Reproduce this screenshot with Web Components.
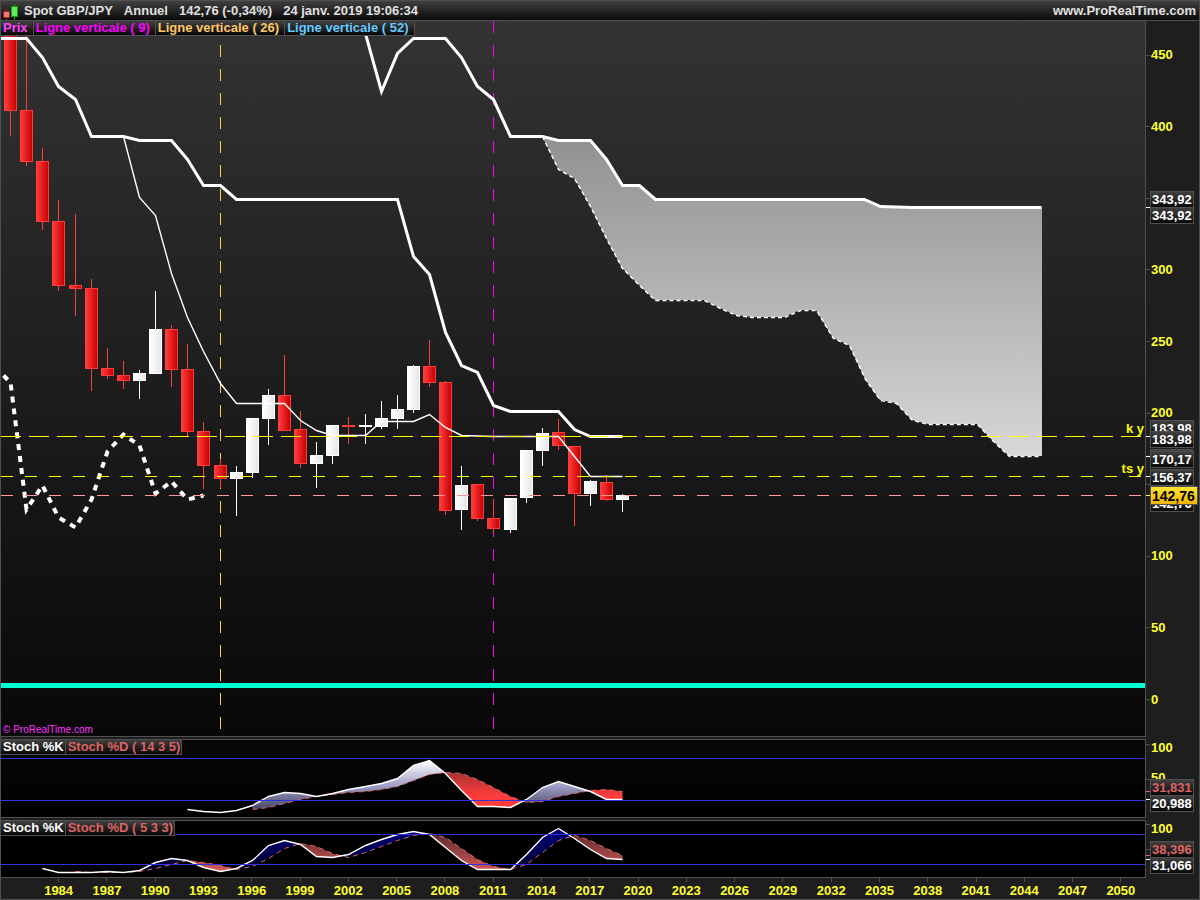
<!DOCTYPE html>
<html lang="fr">
<head>
<meta charset="utf-8">
<meta name="viewport" content="width=device-width, initial-scale=1">
<title>Spot GBP/JPY - Annuel</title>
<style>
  html, body {
    margin: 0;
    height: 100%;
    background: #1e1e1e;
  }
  body {
    font-family: "Liberation Sans", Arial, sans-serif;
    font-size: 13px;
    font-weight: 700;
  }
</style>
</head>
<body>
<chart-window>
  <title-bar slot="title" site="www.ProRealTime.com">
    <span>Spot GBP/JPY</span>
    <span>Annuel</span>
    <span>142,76 (-0,34%)</span>
    <span>24 janv. 2019 19:06:34</span>
  </title-bar>

  <price-pane class="main">
    <legend-tag slot="legend" color="#ff40ff">Prix</legend-tag>
    <legend-tag slot="legend" color="#ff00ff">Ligne verticale ( 9)</legend-tag>
    <legend-tag slot="legend" color="#ffc864">Ligne verticale ( 26)</legend-tag>
    <legend-tag slot="legend" color="#64c8ff">Ligne verticale ( 52)</legend-tag>
    <span slot="credit">© ProRealTime.com</span>
  </price-pane>

  <stoch-pane series="slow">
    <legend-tag slot="legend" color="#ffffff" tight>Stoch %K</legend-tag>
    <legend-tag slot="legend" color="#dc6464" tight>Stoch %D ( 14 3 5)</legend-tag>
  </stoch-pane>

  <stoch-pane series="fast">
    <legend-tag slot="legend" color="#ffffff" tight>Stoch %K</legend-tag>
    <legend-tag slot="legend" color="#dc6464" tight>Stoch %D ( 5 3 3)</legend-tag>
  </stoch-pane>

  <time-axis slot="time" from="1984" to="2050" step="3"></time-axis>
</chart-window>

<script>
// one bar per year
const yearX = year => Math.floor(58.9 + (year - 1984) * 16.112);

const points = list => list.map(p => p.join(',')).join(' ');

// series of y values, one per year, starting at firstYear
const byYear = (firstYear, ys) => ys.map((y, i) => [yearX(firstYear + i), y]);

class ChartWindow extends HTMLElement {
  connectedCallback() {
    this.attachShadow({ mode: 'open' });
    this.shadowRoot.innerHTML = `
      <style>
        :host {
          display: flex;
          flex-direction: column;
          box-sizing: border-box;
          height: 100vh;
          min-height: 400px;
          background: #1e1e1e;
          border: 1px solid #505050;
          border-top: 0;
          overflow: hidden;
        }
        .panes {
          flex: 1;
          min-height: 0;
          display: flex;
          flex-direction: column;
          gap: 2px;
        }
        ::slotted(.main) {
          flex: 1;
          min-height: 0;
        }
      </style>
      <slot name="title"></slot>
      <div class="panes"><slot></slot></div>
      <slot name="time"></slot>
    `;
  }
}
customElements.define('chart-window', ChartWindow);

class TitleBar extends HTMLElement {
  connectedCallback() {
    this.attachShadow({ mode: 'open' });
    this.shadowRoot.innerHTML = `
      <style>
        :host {
          display: flex;
          align-items: center;
          gap: 11px;
          box-sizing: border-box;
          height: 21px;
          padding: 0 3px 0 2px;
          background: linear-gradient(#404040, #0a0a0a);
          border-top: 1px solid #505050;
          border-bottom: 1px solid #505050;
          color: #e0e0e0;
          white-space: nowrap;
        }
        svg {
          width: 17px;
          height: 18px;
          margin-right: -7px;
        }
        .site {
          margin-left: auto;
        }
      </style>
      <svg viewBox="0 0 17 18" shape-rendering="crispEdges" aria-hidden="true">
        <rect x="3" y="7" width="1" height="11" fill="#a02020"/>
        <rect x="0" y="9" width="7" height="7" fill="#a02020"/>
        <rect x="1" y="10" width="5" height="5" fill="#f07878"/>
        <rect x="11" y="2" width="1" height="16" fill="#10a010"/>
        <rect x="8" y="4" width="7" height="11" fill="#10a010"/>
        <rect x="9" y="5" width="5" height="9" fill="#60e860"/>
      </svg>
      <slot></slot>
      <span class="site">${this.getAttribute('site')}</span>
    `;
  }
}
customElements.define('title-bar', TitleBar);

class LegendTag extends HTMLElement {
  connectedCallback() {
    this.attachShadow({ mode: 'open' });
    this.shadowRoot.innerHTML = `
      <style>
        :host {
          display: block;
          box-sizing: border-box;
          height: 15px;
          padding: 0 5px 0 2px;
          line-height: 14px;
          white-space: nowrap;
          color: ${this.getAttribute('color')};
          background: linear-gradient(#404040, #080808);
          border: solid #505050;
          border-width: 0 1px 1px 0;
        }
        :host([tight]) {
          padding-right: 1px;
        }
      </style>
      <slot></slot>
    `;
  }
}
customElements.define('legend-tag', LegendTag);

// value box on the right-hand scale
class ValueTag extends HTMLElement {
  connectedCallback() {
    this.attachShadow({ mode: 'open' });
    this.shadowRoot.innerHTML = `
      <style>
        :host {
          display: block;
          position: absolute;
          left: 4px;
          top: var(--at);
          margin-top: -8px;
          box-sizing: border-box;
          min-width: 43px;
          height: 17px;
          padding: 0 1px;
          line-height: 15px;
          color: #fff;
          background: linear-gradient(#404040, #080808);
          border: 1px solid #505050;
        }
        :host([tone="signal"]) {
          color: #dc6464;
        }
        :host([tone="last"]) {
          margin-top: -9px;
          min-width: 48px;
          height: 19px;
          line-height: 18px;
          font-size: 14px;
          color: #000;
          background: linear-gradient(#ffe632, #f0b400);
        }
      </style>
      <slot></slot>
    `;
  }
}
customElements.define('value-tag', ValueTag);

const PANE_STYLE = `
  :host {
    display: flex;
    box-sizing: border-box;
  }
  .plot {
    position: relative;
    flex: 1;
    min-width: 0;
    display: grid;
    grid-template: minmax(0, 1fr) / minmax(0, 1fr);
    border: solid #505050;
    border-width: 0 1px 1px 0;
  }
  svg {
    display: block;
    width: 100%;
    height: 100%;
  }
  svg * {
    vector-effect: non-scaling-stroke;
  }
  .legend {
    position: absolute;
    left: 0;
    top: 0;
    display: flex;
  }
  .scale {
    position: relative;
    width: 53px;
    display: grid;
    grid-template: minmax(0, 1fr) / minmax(0, 1fr);
  }
  .scale span {
    position: absolute;
    left: 5px;
    top: var(--at);
    margin-top: -8px;
    line-height: 16px;
    color: #ffff32;
  }
`;

// right-hand scale: ticks, plain labels, then the value boxes above them
function scaleMarkup(top, height, ticks, labels, tags) {
  const at = y => `--at: ${(y - top) / height * 100}%`;
  return `
    <svg viewBox="0 ${top} 53 ${height}" preserveAspectRatio="none" shape-rendering="crispEdges" aria-hidden="true">
      ${ticks.map(([y, color]) => `<rect x="0" y="${y}" width="4" height="1" fill="${color}"/>`).join('')}
    </svg>
    ${labels.map(([y, text]) => `<span style="${at(y)}">${text}</span>`).join('')}
    ${tags.map(([y, text, tone]) => `<value-tag style="${at(y)}" tone="${tone || ''}">${text}</value-tag>`).join('')}
  `;
}

// year, body top, body bottom, high, low, rising
const CANDLES = [
  [1981, 30, 110, 30, 135, 0], [1982, 110, 161, 30, 165, 0],
  [1983, 161, 221, 148, 229, 0], [1984, 221, 285, 200, 290, 0],
  [1985, 285, 288, 214, 315, 0], [1986, 288, 368, 279, 390, 0],
  [1987, 368, 375, 348, 378, 0], [1988, 375, 380, 361, 388, 0],
  [1989, 373, 380, 370, 398, 1], [1990, 329, 373, 291, 373, 1],
  [1991, 329, 369, 325, 386, 0], [1992, 369, 431, 344, 435, 0],
  [1993, 431, 465, 422, 488, 0], [1994, 465, 478, 459, 487, 0],
  [1995, 472, 478, 466, 515, 1], [1996, 418, 472, 418, 477, 1],
  [1997, 395, 418, 389, 444, 1], [1998, 395, 430, 355, 430, 0],
  [1999, 429, 463, 411, 467, 0], [2000, 455, 463, 442, 487, 1],
  [2001, 425, 455, 425, 463, 1], [2002, 425, 426, 417, 443, 0],
  [2003, 425, 426, 414, 443, 1], [2004, 418, 426, 401, 428, 1],
  [2005, 409, 418, 395, 428, 1], [2006, 366, 409, 365, 412, 1],
  [2007, 366, 382, 340, 386, 0], [2008, 382, 510, 381, 514, 0],
  [2009, 485, 509, 466, 529, 1], [2010, 484, 518, 484, 520, 0],
  [2011, 518, 528, 499, 532, 0], [2012, 498, 529, 498, 532, 1],
  [2013, 450, 497, 450, 502, 1], [2014, 433, 450, 428, 465, 1],
  [2015, 432, 445, 419, 449, 0], [2016, 446, 493, 446, 525, 0],
  [2017, 481, 493, 480, 505, 1], [2018, 482, 499, 475, 500, 0],
  [2019, 495, 499, 494, 511, 1]
];

function candle([year, top, bottom, high, low, rising]) {
  const x = yearX(year);
  const edge = rising ? '#ffffff' : '#ff3c3c';
  const inner = bottom - top > 1
    ? `<rect x="${x - 5}" y="${top + 1}" width="11" height="${bottom - top - 1}" fill="url(#${rising ? 'up' : 'down'})"/>`
    : '';
  return `
    <rect x="${x}" y="${high}" width="1" height="${low - high + 1}" fill="${edge}"/>
    <rect x="${x - 6}" y="${top}" width="13" height="${bottom - top + 1}" fill="${edge}"/>
    ${inner}`;
}

const KIJUN = [[0, 38], [26, 38], [42, 57], [58, 86], [75, 99], [91, 136], [123, 136], [139, 140],
  [171, 140], [187, 159], [203, 185], [220, 185], [236, 199], [397, 199], [413, 256], [429, 274],
  [445, 332], [461, 365], [477, 372], [493, 405], [510, 411], [558, 411], [574, 429], [590, 436], [622, 436]];

const TENKAN = [[123, 136], [139, 197], [155, 215], [171, 273], [187, 317], [203, 351], [220, 383],
  [236, 403], [284, 403], [300, 420], [316, 430], [332, 435], [365, 435], [381, 421], [413, 421],
  [429, 414], [445, 427], [461, 435], [493, 436], [558, 436], [574, 456], [590, 476], [622, 476]];

const SPAN_B = [[361, 19], [381, 91], [397, 53], [413, 38], [445, 38], [461, 57], [477, 86],
  [493, 99], [510, 136], [542, 136], [558, 140], [590, 140], [606, 159], [622, 185], [639, 185],
  [655, 199], [864, 199], [880, 206], [912, 207], [1041, 207]];

const SPAN_A = [[542, 136], [558, 169], [574, 178], [590, 206], [606, 238], [622, 268], [639, 285],
  [655, 300], [704, 300], [720, 308], [736, 315], [752, 317], [784, 317], [800, 310], [816, 310],
  [833, 338], [849, 345], [865, 379], [880, 400], [896, 403], [912, 420], [928, 424], [977, 424],
  [993, 441], [1009, 456], [1041, 456]];

const CHIKOU = [[3, 375], [10, 382], [26, 509], [42, 485], [58, 517], [75, 527], [91, 499],
  [107, 451], [123, 434], [139, 445], [155, 493], [171, 481], [187, 499], [203, 495]];

class PricePane extends HTMLElement {
  connectedCallback() {
    const top = 21;
    const height = 715;
    const cloud = SPAN_B.filter(p => p[0] >= 542).concat([[1042, 207], [1042, 456]], [...SPAN_A].reverse());
    const grey = '#505050';
    const ticks = [];
    for (let price = 450; price >= 0; price -= 50) {
      ticks.push([Math.floor(699.2 - price * 1.431), grey]);
    }
    ticks.push([207, '#fff'], [436, '#fff'], [456, '#fff'], [476, '#fff'], [495, '#ffff32']);

    this.attachShadow({ mode: 'open' });
    this.shadowRoot.innerHTML = `
      <style>
        ${PANE_STYLE}
        .plot {
          background: linear-gradient(#333333, #080808);
        }
        .scale {
          margin-bottom: 1px;
        }
        .level {
          position: absolute;
          right: 1px;
          top: var(--at);
          margin-top: -15px;
          line-height: 16px;
          color: #ffff00;
        }
        .credit {
          position: absolute;
          left: 2px;
          bottom: 0;
          line-height: 12px;
          font-size: 10px;
          font-weight: 400;
          color: #ff32ff;
        }
      </style>
      <div class="plot">
        <svg viewBox="1 ${top} 1144 ${height}" preserveAspectRatio="none" role="img" aria-label="GBP/JPY">
          <defs>
            <linearGradient id="down"><stop offset="0" stop-color="#ff3c3c"/><stop offset="1" stop-color="#c80000"/></linearGradient>
            <linearGradient id="up"><stop offset="0" stop-color="#ffffff"/><stop offset="1" stop-color="#e6e6e6"/></linearGradient>
            <linearGradient id="cloud" x1="0" y1="0" x2="0" y2="1"><stop offset="0" stop-color="#919191"/><stop offset="1" stop-color="#d7d7d7"/></linearGradient>
          </defs>
          <g transform="translate(.5 .5)" fill="none">
            <path d="M220 21V729" stroke="#ffc864" stroke-dasharray="12 12" transform="translate(0 -.5)"/>
            <path d="M493 21V729" stroke="#ff00ff" stroke-dasharray="12 12" transform="translate(0 -.5)"/>
          </g>
          <polygon points="${points(cloud)}" fill="url(#cloud)"/>
          <g shape-rendering="crispEdges">${CANDLES.map(candle).join('')}</g>
          <g transform="translate(.5 .5)" fill="none" stroke="#ffffff">
            <polyline points="${points(SPAN_A)}" stroke-width="1.4" stroke-dasharray="4 3"/>
            <polyline points="${points(TENKAN)}" stroke-width="1.4"/>
            <polyline points="${points(CHIKOU)}" stroke-width="4" stroke-dasharray="6 6"/>
            <polyline points="${points(KIJUN)}" stroke-width="3"/>
            <polyline points="${points(SPAN_B)}" stroke-width="3"/>
          </g>
          <g transform="translate(0 .5)" fill="none">
            <path d="M1 436H1141" stroke="#ffff00" stroke-dasharray="20 8"/>
            <path d="M1 476H1141" stroke="#ffff00" stroke-dasharray="12 12"/>
            <path d="M1 495H1141" stroke="#ff9696" stroke-dasharray="12 12"/>
          </g>
          <rect x="1" y="683" width="1144" height="5" fill="#00ffd2"/>
        </svg>
        <div class="legend"><slot name="legend"></slot></div>
        <span class="level" style="--at: ${(436 - top) / height * 100}%">k y</span>
        <span class="level" style="--at: ${(476 - top) / height * 100}%">ts y</span>
        <div class="credit"><slot name="credit"></slot></div>
      </div>
      <div class="scale">
        ${scaleMarkup(top, height, ticks,
          [[55, '450'], [127, '400'], [270, '300'], [342, '250'], [413, '200'], [556, '100'], [628, '50'], [700, '0']],
          [[199, '343,92'], [215, '343,92'], [428, '183,98'], [439, '183,98'], [457, ''], [459, '170,17'],
            [477, '156,37'], [503, '142,76'], [495, '142,76', 'last']])}
      </div>
    `;
  }
}
customElements.define('price-pane', PricePane);

const STOCH = {
  slow: {
    top: 740, height: 77, high: 758, low: 800,
    back: 'linear-gradient(#080808, #000000)',
    k: byYear(1992, [809, 811, 812, 810, 805, 796, 792, 793, 796, 793, 789, 786, 783, 778, 765, 760,
      773, 790, 806, 806, 807, 799, 787, 781, 786, 791, 799, 799]),
    d: byYear(1996, [809, 807, 803, 799, 796, 794, 792, 791, 789, 786, 780, 774, 772, 773, 779, 787,
      796, 802, 801, 796, 793, 790, 789, 791]),
    up: [[760, '#ffffff'], [785, '#a0a0c8'], [810, '#404060']],
    down: [[770, '#a03232'], [795, '#ff3c3c']],
    ticks: [[744, '#505050'], [779, '#505050'], [791, '#dc6464'], [799, '#ffffff']],
    labels: [[748, '100'], [778, '50']],
    tags: [[787, '31,831', 'signal'], [803, '20,988']]
  },
  fast: {
    top: 821, height: 56, high: 834, low: 864,
    back: '#000000',
    k: byYear(1983, [868, 872, 872, 872, 871, 872, 870, 862, 858, 860, 867, 871, 868, 860, 845, 840,
      844, 856, 857, 854, 845, 839, 834, 831, 834, 847, 860, 869, 869, 869, 854, 837, 828, 838, 849, 858, 859]),
    d: byYear(1985, [871, 872, 872, 872, 871, 868, 864, 860, 862, 865, 869, 866, 858, 848, 843, 846,
      853, 857, 852, 846, 840, 835, 833, 837, 848, 859, 866, 869, 864, 852, 840, 835, 840, 848, 855]),
    up: [[828, '#000080'], [870, '#000028']],
    down: [[830, '#502828'], [872, '#dc5a5a']],
    ticks: [[824, '#505050'], [849, '#505050'], [855, '#dc6464'], [859, '#ffffff']],
    labels: [[829, '100']],
    tags: [[849, '38,396', 'signal'], [865, '31,066']]
  }
};

// splits the band between %K and %D at each crossing
function bands(k, d) {
  const kk = k.slice(k.length - d.length);
  const out = [];
  let current = null;
  const start = up => { current = { up, a: [], b: [] }; out.push(current); };
  d.forEach(([x, dy], i) => {
    const ky = kk[i][1];
    const up = ky < dy;
    if (!current) start(up);
    if (up !== current.up && ky !== dy) {
      const [px, pk] = kk[i - 1];
      const pd = d[i - 1][1];
      const t = (pk - pd) / ((pk - pd) - (ky - dy));
      const cross = [px + (x - px) * t, pk + (ky - pk) * t];
      current.a.push(cross);
      start(up);
      current.a.push(cross);
    }
    current.a.push([x, ky]);
    current.b.push([x, dy]);
  });
  return out.map(s => `<polygon points="${points(s.a.concat(s.b.reverse()))}" fill="url(#${s.up ? 'up' : 'down'})"/>`).join('');
}

function fade(id, stops) {
  const y1 = stops[0][0];
  const y2 = stops[stops.length - 1][0];
  return `<linearGradient id="${id}" gradientUnits="userSpaceOnUse" x1="0" y1="${y1}" x2="0" y2="${y2}">
    ${stops.map(([y, color]) => `<stop offset="${(y - y1) / (y2 - y1)}" stop-color="${color}"/>`).join('')}
  </linearGradient>`;
}

class StochPane extends HTMLElement {
  connectedCallback() {
    const s = STOCH[this.getAttribute('series')];
    this.attachShadow({ mode: 'open' });
    this.shadowRoot.innerHTML = `
      <style>
        ${PANE_STYLE}
        :host {
          height: ${s.height + 2}px;
        }
        .plot {
          border-top-width: 1px;
          background: ${s.back};
        }
        .scale {
          margin: 1px 0;
        }
      </style>
      <div class="plot">
        <svg viewBox="1 ${s.top} 1144 ${s.height}" preserveAspectRatio="none" role="img" aria-label="Stochastique">
          <defs>${fade('up', s.up)}${fade('down', s.down)}</defs>
          <g transform="translate(.5 .5)" fill="none">
            ${bands(s.k, s.d)}
            <polyline points="${points(s.d)}" stroke="#dc6464" stroke-dasharray="5 4"/>
            <polyline points="${points(s.k)}" stroke="#ffffff" stroke-width="1.4"/>
            <path d="M0 ${s.high}H1145M0 ${s.low}H1145" stroke="#3232dc"/>
          </g>
        </svg>
        <div class="legend"><slot name="legend"></slot></div>
      </div>
      <div class="scale">${scaleMarkup(s.top, s.height, s.ticks, s.labels, s.tags)}</div>
    `;
  }
}
customElements.define('stoch-pane', StochPane);

class TimeAxis extends HTMLElement {
  connectedCallback() {
    const from = Number(this.getAttribute('from'));
    const to = Number(this.getAttribute('to'));
    const step = Number(this.getAttribute('step'));
    const years = [];
    for (let y = from; y <= to; y += step) years.push(y);

    this.attachShadow({ mode: 'open' });
    this.shadowRoot.innerHTML = `
      <style>
        :host {
          display: grid;
          grid-template-columns: 335fr repeat(${years.length}, 483fr);
          height: 21px;
          margin-right: 54px;
          color: #ffff32;
        }
        span {
          display: flex;
          flex-direction: column;
          align-items: center;
          min-width: 0;
          line-height: 18px;
        }
        span::before {
          content: '';
          width: 1px;
          height: 4px;
          flex: none;
          background: #505050;
        }
      </style>
      <i></i>
      ${years.map(y => `<span>${y}</span>`).join('')}
    `;
  }
}
customElements.define('time-axis', TimeAxis);
</script>
</body>
</html>
